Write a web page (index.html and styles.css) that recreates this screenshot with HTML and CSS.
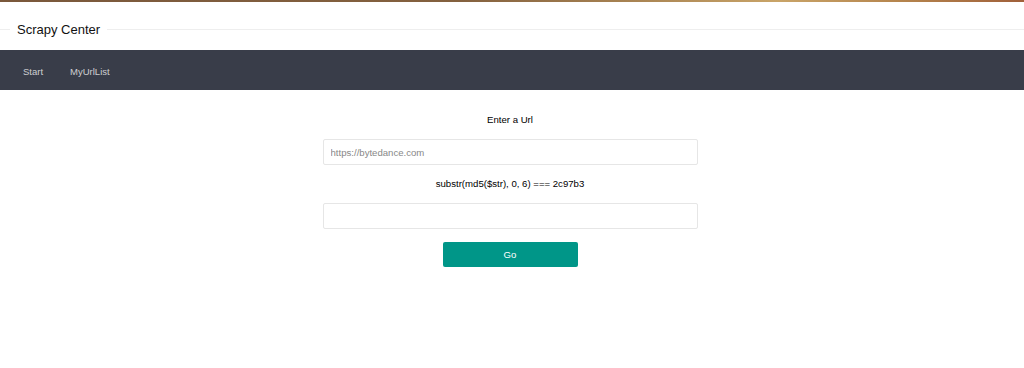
FILE: index.html
```html
<!DOCTYPE html>
<html>
<head>
    <title>Scrapy Center</title>
    <link rel="stylesheet" href="styles.css">
</head>
<body>
    <div class="top-strip"></div>

    <div class="field-title">
        <span class="line line-short"></span>
        <span class="title-text">Scrapy Center</span>
        <span class="line line-long"></span>
    </div>

    <ul class="nav">
        <li><a href="#">Start</a></li>
        <li><a href="#">MyUrlList</a></li>
    </ul>

    <div class="main">
        <form class="url-form">
            <label for="url" class="form-label">Enter a Url</label>
            <input type="text" id="url" name="url" class="form-input" placeholder="https://bytedance.com">
            <label for="str" class="form-label">substr(md5($str), 0, 6) === 2c97b3</label>
            <input type="text" id="str" name="str" class="form-input">
            <button type="button" class="btn-go">Go</button>
        </form>
    </div>
</body>
</html>
```

FILE: styles.css
```css
body {
    margin: 0;
    font-family: "Liberation Sans", Arial, sans-serif;
    background: #fff;
    color: #111;
}

.top-strip {
    height: 2px;
    background: linear-gradient(to right, #7a583b 0%, #84613f 45%, #a98453 62%, #c9a468 76%, #b5844d 88%, #a0603a 100%);
}

.field-title {
    display: flex;
    align-items: center;
    height: 42px;
    padding-top: 6px;
}

.line {
    height: 1px;
    background: #eee;
}

.line-short {
    width: 10px;
}

.line-long {
    flex: 1;
}

.title-text {
    padding: 0 7px;
    font-size: 13px;
    color: #111;
}

.nav {
    display: flex;
    align-items: center;
    gap: 27px;
    height: 40px;
    margin: 0;
    padding: 0 0 0 23px;
    list-style: none;
    background: #393d49;
}

.nav a {
    font-size: 9.5px;
    color: rgba(255, 255, 255, 0.75);
    text-decoration: none;
}

.main {
    padding: 20px 4px 0 0;
}

.url-form {
    display: flex;
    flex-direction: column;
    align-items: center;
    gap: 9px;
    width: 375px;
    margin: 0 auto;
}

.form-label {
    font-size: 9.6px;
    line-height: 20px;
    color: #000;
}

.form-input {
    box-sizing: border-box;
    width: 100%;
    height: 26px;
    padding: 0 7px;
    border: 1px solid #e6e6e6;
    border-radius: 2px;
    font-family: inherit;
    font-size: 9.6px;
    color: #333;
    background: #fff;
}

.form-input::placeholder {
    color: #888;
}

.btn-go {
    width: 135px;
    height: 25px;
    margin-top: 4px;
    border: none;
    border-radius: 2px;
    background: #009688;
    color: #fff;
    font-family: inherit;
    font-size: 9.6px;
    cursor: pointer;
}
```
